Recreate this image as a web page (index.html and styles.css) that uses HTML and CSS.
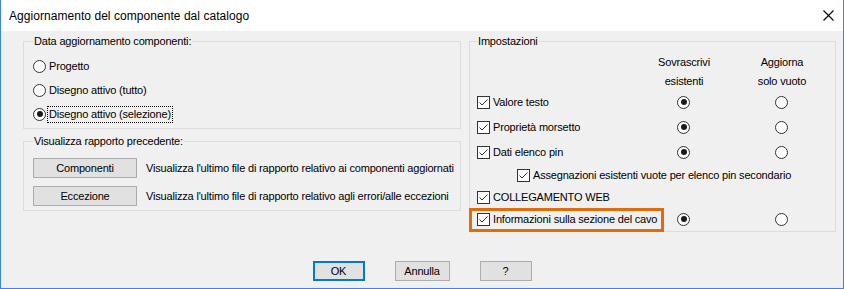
FILE: index.html
```html
<!DOCTYPE html>
<html lang="it">
<head>
<meta charset="utf-8">
<title>Aggiornamento del componente dal catalogo</title>
<link rel="stylesheet" href="styles.css">
</head>
<body>
<div class="window">
  <div class="titlebar">
    <span class="title">Aggiornamento del componente dal catalogo</span>
    <svg class="close" width="11" height="11" viewBox="0 0 11 11"><path d="M0.5 0.5 L10.5 10.5 M10.5 0.5 L0.5 10.5" stroke="#000" stroke-width="1.1" fill="none"/></svg>
  </div>
  <div class="content">
    <div class="main">
      <div class="left">
        <fieldset class="group group-data">
          <legend>Data aggiornamento componenti:</legend>
          <div class="radio-row"><span class="radio"></span><span class="lbl">Progetto</span></div>
          <div class="radio-row"><span class="radio"></span><span class="lbl">Disegno attivo (tutto)</span></div>
          <div class="radio-row"><span class="radio checked"></span><span class="lbl focus">Disegno attivo (selezione)</span></div>
        </fieldset>
        <fieldset class="group group-report">
          <legend>Visualizza rapporto precedente:</legend>
          <div class="btn-row"><span class="btn btn-wide">Componenti</span><span class="desc">Visualizza l'ultimo file di rapporto relativo ai componenti aggiornati</span></div>
          <div class="btn-row"><span class="btn btn-wide">Eccezione</span><span class="desc">Visualizza l'ultimo file di rapporto relativo agli errori/alle eccezioni</span></div>
        </fieldset>
      </div>
      <fieldset class="group group-settings">
        <legend>Impostazioni</legend>
        <div class="headers">
          <span></span>
          <span class="hdr">Sovrascrivi<br>esistenti</span>
          <span class="hdr">Aggiorna<br>solo vuoto</span>
        </div>
        <div class="set-row">
          <span class="chk-lbl"><span class="check"><svg width="11" height="11" viewBox="0 0 11 11"><path d="M1.5 5.5 L4 8 L9.5 2.5" stroke="#333" stroke-width="1" fill="none"/></svg></span>Valore testo</span>
          <span class="radio checked"></span><span></span><span class="radio"></span>
        </div>
        <div class="set-row gap3">
          <span class="chk-lbl"><span class="check"><svg width="11" height="11" viewBox="0 0 11 11"><path d="M1.5 5.5 L4 8 L9.5 2.5" stroke="#333" stroke-width="1" fill="none"/></svg></span>Proprietà morsetto</span>
          <span class="radio checked"></span><span></span><span class="radio"></span>
        </div>
        <div class="set-row gap3">
          <span class="chk-lbl"><span class="check"><svg width="11" height="11" viewBox="0 0 11 11"><path d="M1.5 5.5 L4 8 L9.5 2.5" stroke="#333" stroke-width="1" fill="none"/></svg></span>Dati elenco pin</span>
          <span class="radio checked"></span><span></span><span class="radio"></span>
        </div>
        <div class="set-row gap1 sub">
          <span class="chk-lbl"><span class="check"><svg width="11" height="11" viewBox="0 0 11 11"><path d="M1.5 5.5 L4 8 L9.5 2.5" stroke="#333" stroke-width="1" fill="none"/></svg></span>Assegnazioni esistenti vuote per elenco pin secondario</span>
        </div>
        <div class="set-row">
          <span class="chk-lbl"><span class="check"><svg width="11" height="11" viewBox="0 0 11 11"><path d="M1.5 5.5 L4 8 L9.5 2.5" stroke="#333" stroke-width="1" fill="none"/></svg></span>COLLEGAMENTO WEB</span>
        </div>
        <div class="set-row">
          <span class="chk-lbl"><span class="check"><svg width="11" height="11" viewBox="0 0 11 11"><path d="M1.5 5.5 L4 8 L9.5 2.5" stroke="#333" stroke-width="1" fill="none"/></svg></span>Informazioni sulla sezione del cavo</span>
          <span class="radio checked"></span><span></span><span class="radio"></span>
        </div>
        <div class="highlight"></div>
      </fieldset>
    </div>
    <div class="footer">
      <span class="btn btn-ok">OK</span>
      <span class="btn btn-cancel">Annulla</span>
      <span class="btn btn-help">?</span>
    </div>
  </div>
</div>
</body>
</html>
```
FILE: styles.css
```css
* { box-sizing: border-box; }
html, body { margin: 0; padding: 0; background: #f0f0f0; }
body {
  font-family: "Liberation Sans", Arial, sans-serif;
  font-size: 11px;
  letter-spacing: -0.18px;
  color: #000;
}
.window {
  width: 844px;
  height: 289px;
  border: 1px solid #3a83f1;
  border-top: none;
  display: flex;
  flex-direction: column;
  background: #f0f0f0;
}
.titlebar {
  height: 31px;
  flex: none;
  background: #fff;
  display: flex;
  align-items: center;
  justify-content: space-between;
  padding: 0 9px 0 8px;
}
.title { font-size: 12px; letter-spacing: 0.05px; }
.close { display: block; margin-top: 0; }
.content {
  flex: 1;
  display: flex;
  flex-direction: column;
}
.main {
  display: flex;
  align-items: flex-start;
  gap: 8px;
  padding: 4px 0 0 22px;
}
.left {
  width: 438px;
  display: flex;
  flex-direction: column;
}
.group {
  margin: 0;
  border: 1px solid #dcdcdc;
  min-width: 0;
  position: relative;
}
.group legend {
  padding: 0 1px;
  line-height: 13px;
  height: 13px;
}
.group-data { padding: 6px 9px 2px 9px; }
.group-report { padding: 10px 9px 4px 9px; margin-top: 6px; }
.group-settings {
  width: 367px;
  padding: 5px 7px 1px 7px;
}
.radio-row {
  height: 24px;
  display: flex;
  align-items: center;
}
.radio {
  width: 13px;
  height: 13px;
  border: 1px solid #333;
  border-radius: 50%;
  background: #fff;
  position: relative;
  flex: none;
}
.radio.checked::after {
  content: "";
  position: absolute;
  left: 2.5px;
  top: 2.5px;
  width: 6px;
  height: 6px;
  border-radius: 50%;
  background: #1a1a1a;
}
.lbl { margin-left: 3px; line-height: 13px; }
.lbl.focus {
  border: 1px dotted #000;
  padding: 1px 1px;
  margin-left: 1px;
}
.btn-row {
  display: flex;
  align-items: center;
  height: 20px;
}
.btn-row + .btn-row { margin-top: 8px; }
.btn {
  flex: none;
  height: 20px;
  display: flex;
  align-items: center;
  justify-content: center;
  background: #e1e1e1;
  border: 1px solid #adadad;
}
.btn-wide { width: 104px; }
.desc {
  margin-left: 9px;
  white-space: nowrap;
}
.headers {
  display: grid;
  grid-template-columns: 157px 100px 96px;
  line-height: 19px;
  height: 38px;
}
.hdr { text-align: center; }
.set-row {
  display: grid;
  grid-template-columns: 200px 13px 85px 13px;
  align-items: center;
  height: 22px;
}
.set-row.gap3 { margin-top: 3px; }
.set-row.gap1 { margin-top: 1px; }
.set-row.sub { padding-left: 40px; }
.chk-lbl {
  display: flex;
  align-items: center;
  white-space: nowrap;
}
.check {
  width: 13px;
  height: 13px;
  border: 1px solid #333;
  background: #fff;
  margin-right: 3px;
  flex: none;
}
.check svg { display: block; }
.highlight {
  position: absolute;
  left: -1px;
  top: 160px;
  width: 195px;
  height: 24px;
  border: 3px solid #e36c0a;
  pointer-events: none;
}
.footer {
  margin-top: auto;
  display: flex;
  justify-content: center;
  gap: 30px;
  padding: 0 0 7px 0;
}
.btn-ok { width: 52px; border: 2px solid #0078d7; }
.btn-cancel { width: 55px; }
.btn-help { width: 52px; }
```
